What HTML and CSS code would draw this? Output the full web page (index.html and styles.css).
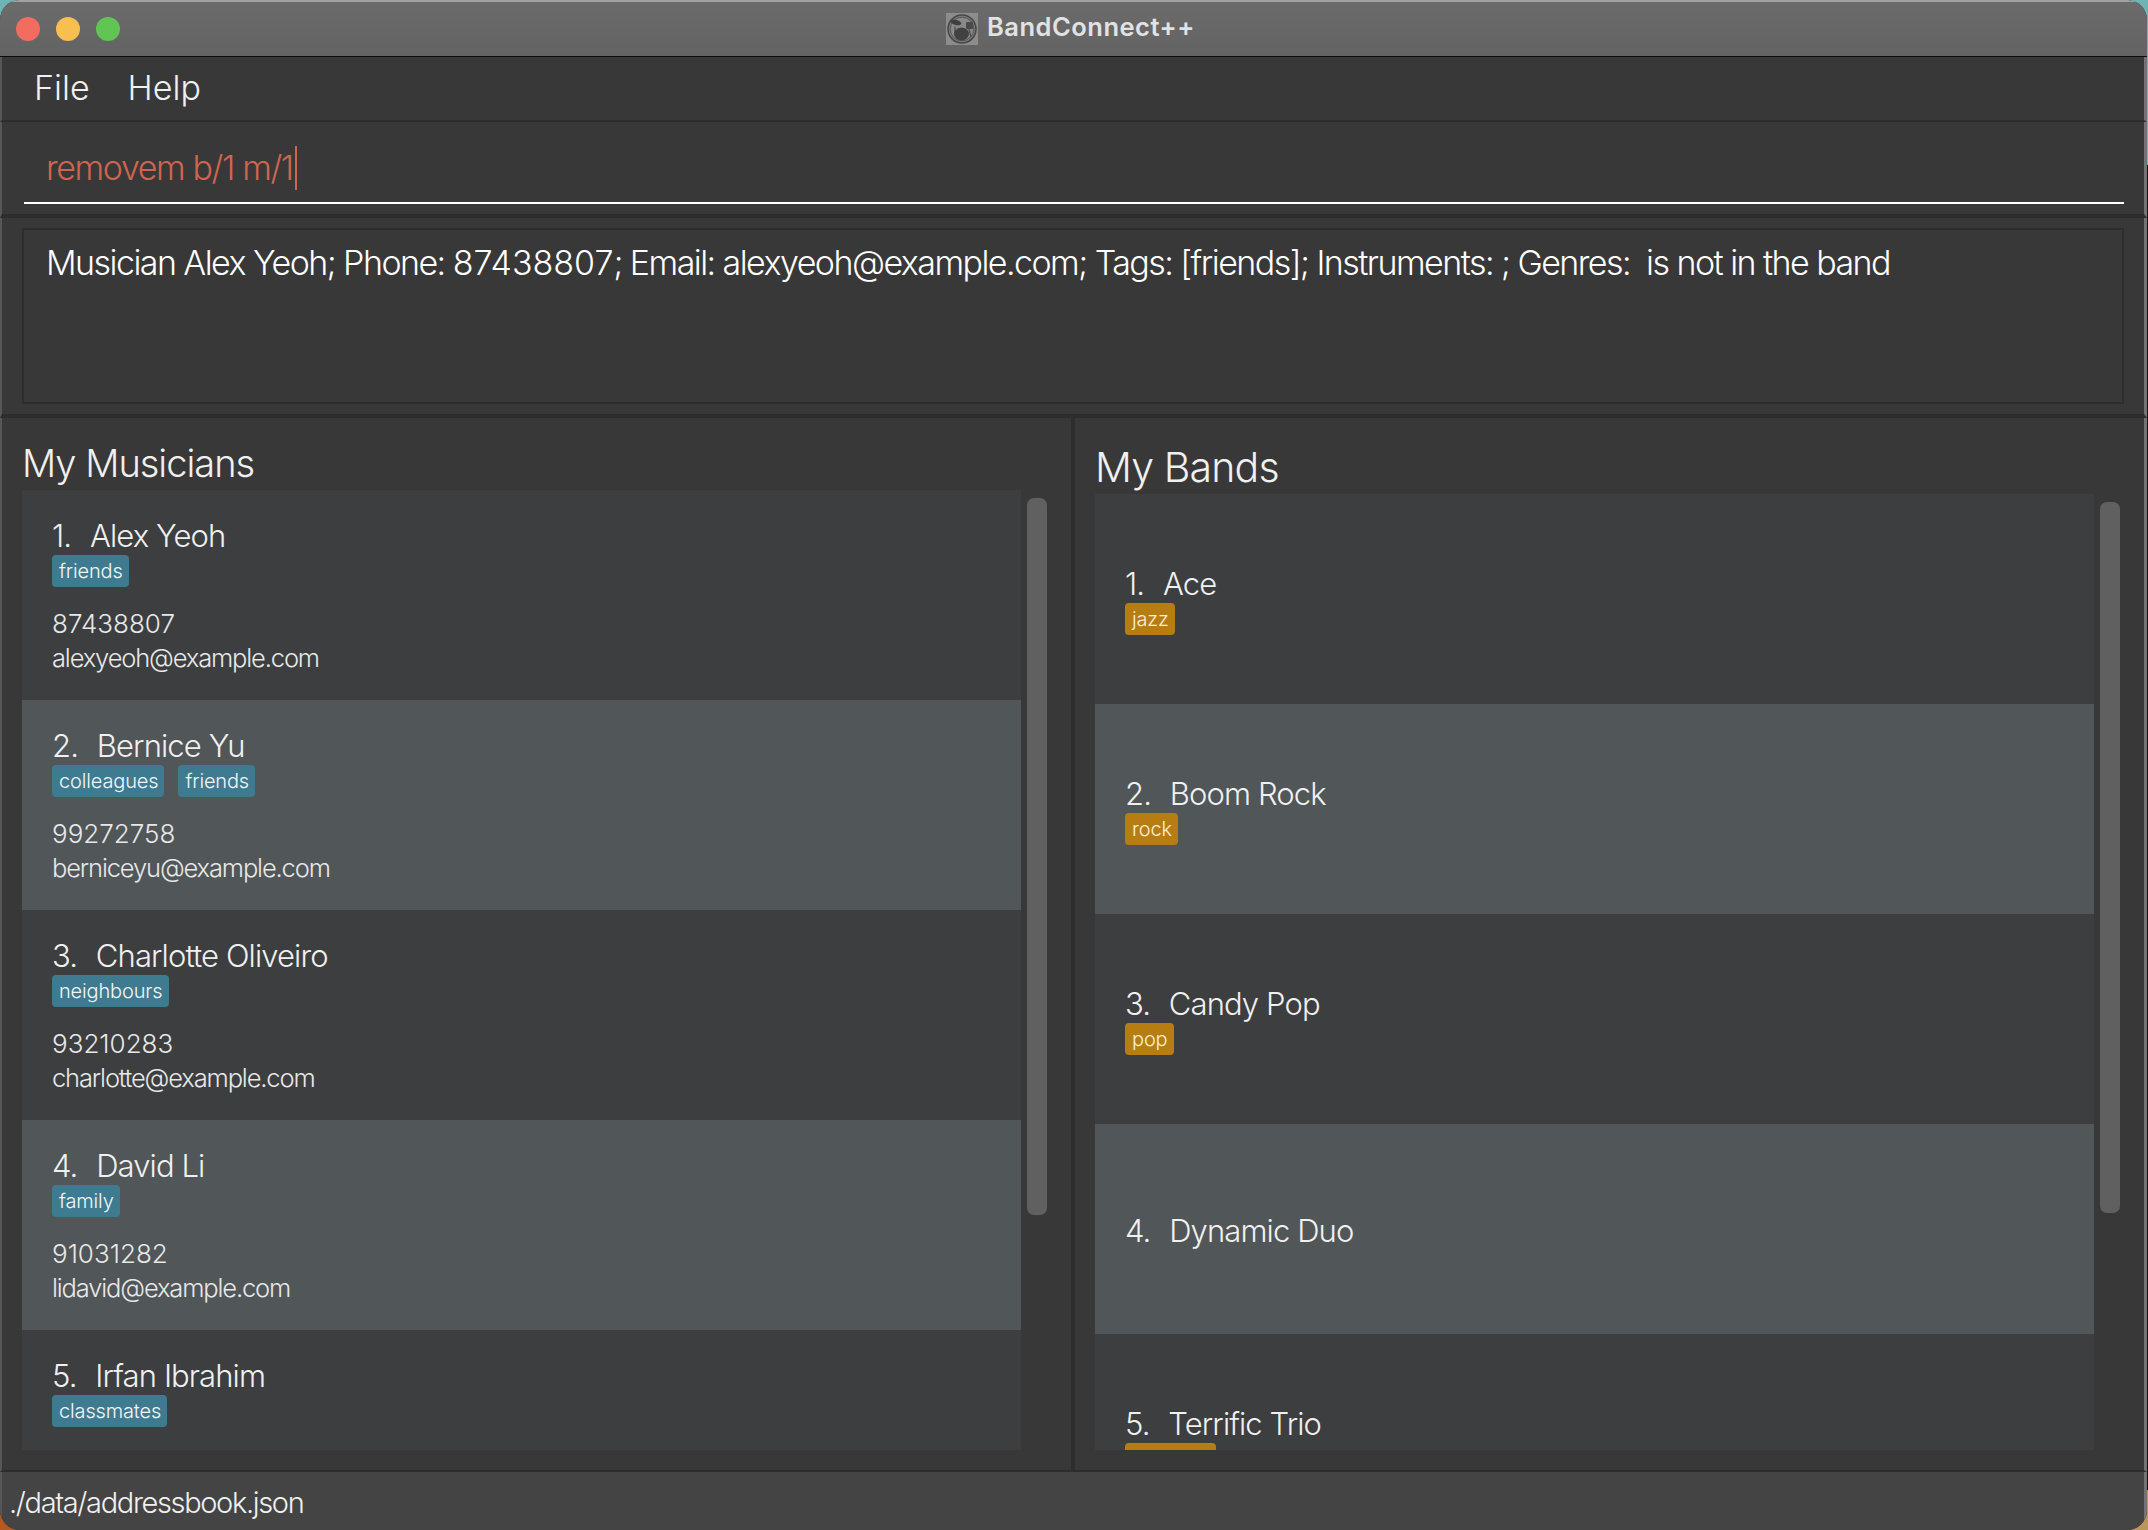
FILE: index.html
```html
<!DOCTYPE html>
<html lang="en">
<head>
    <meta charset="UTF-8">
    <meta name="viewport" content="width=device-width, initial-scale=1.0">
    <title>BandConnect++</title>
    <link rel="stylesheet" href="styles.css">
</head>
<body>
    <div class="window">
        <div class="titlebar">
            <div class="lights">
                <span class="light red"></span>
                <span class="light yellow"></span>
                <span class="light green"></span>
            </div>
            <div class="apptitle">
                <svg class="appicon" viewBox="0 0 32 32" width="32" height="32">
                    <rect width="32" height="32" fill="#8c8c8c"/>
                    <circle cx="16" cy="16" r="14" fill="#7a7a7a" stroke="#474747" stroke-width="1.5"/>
                    <circle cx="16" cy="16" r="11.8" fill="#8a8a8a" stroke="#555" stroke-width="1"/>
                    <ellipse cx="10" cy="9.5" rx="5.5" ry="2.6" fill="#3f3f3f" transform="rotate(14 10 9.5)"/>
                    <rect x="20" y="9" width="7" height="7" rx="1" fill="#4a4a4a"/>
                    <path d="M9 13.5 L9 22 M23 16 L25 24" stroke="#4a4a4a" stroke-width="1.2" fill="none"/>
                    <ellipse cx="15.5" cy="21" rx="7.5" ry="6.5" fill="#414141"/>
                </svg>
                <span>BandConnect++</span>
            </div>
        </div>

        <div class="menubar">
            <span class="menuitem">File</span>
            <span class="menuitem">Help</span>
        </div>

        <div class="commandbox">
            <div class="commandinput">removem b/1 m/1<span class="caret"></span></div>
        </div>

        <div class="resultbox">
            <div class="resultdisplay">Musician Alex Yeoh; Phone: <span class="digits">87438807</span>; Email: alexyeoh@example.com; Tags: [friends]; Instruments: ; Genres:&nbsp; is not in the band</div>
        </div>

        <div class="panels">
            <section class="panel musicians">
                <h2>My Musicians</h2>
                <div class="listwrap">
                    <div class="list">
                        <div class="card">
                            <div class="name"><span class="num">1.</span> Alex Yeoh</div>
                            <div class="tags"><span class="tag">friends</span></div>
                            <div class="phone">87438807</div>
                            <div class="email">alexyeoh@example.com</div>
                        </div>
                        <div class="card">
                            <div class="name"><span class="num">2.</span> Bernice Yu</div>
                            <div class="tags"><span class="tag">colleagues</span><span class="tag">friends</span></div>
                            <div class="phone">99272758</div>
                            <div class="email">berniceyu@example.com</div>
                        </div>
                        <div class="card">
                            <div class="name"><span class="num">3.</span> Charlotte Oliveiro</div>
                            <div class="tags"><span class="tag">neighbours</span></div>
                            <div class="phone">93210283</div>
                            <div class="email">charlotte@example.com</div>
                        </div>
                        <div class="card">
                            <div class="name"><span class="num">4.</span> David Li</div>
                            <div class="tags"><span class="tag">family</span></div>
                            <div class="phone">91031282</div>
                            <div class="email">lidavid@example.com</div>
                        </div>
                        <div class="card">
                            <div class="name"><span class="num">5.</span> Irfan Ibrahim</div>
                            <div class="tags"><span class="tag">classmates</span></div>
                        </div>
                    </div>
                    <div class="scrolltrack"><div class="thumb"></div></div>
                </div>
            </section>

            <section class="panel bands">
                <h2>My Bands</h2>
                <div class="listwrap">
                    <div class="list">
                        <div class="card band">
                            <div class="name"><span class="num">1.</span> Ace</div>
                            <div class="tags"><span class="tag genre">jazz</span></div>
                        </div>
                        <div class="card band">
                            <div class="name"><span class="num">2.</span> Boom Rock</div>
                            <div class="tags"><span class="tag genre">rock</span></div>
                        </div>
                        <div class="card band">
                            <div class="name"><span class="num">3.</span> Candy Pop</div>
                            <div class="tags"><span class="tag genre">pop</span></div>
                        </div>
                        <div class="card band">
                            <div class="name"><span class="num">4.</span> Dynamic Duo</div>
                        </div>
                        <div class="card band">
                            <div class="name"><span class="num">5.</span> Terrific Trio</div>
                            <div class="tags"><span class="tag genre wide"></span></div>
                        </div>
                    </div>
                    <div class="scrolltrack"><div class="thumb"></div></div>
                </div>
            </section>
        </div>

        <div class="statusbar">./data/addressbook.json</div>
    </div>
</body>
</html>
```

FILE: styles.css
```css
html, body {
    margin: 0;
    height: 100%;
}
body {
    overflow: hidden;
    font-family: "Inter", "Liberation Sans", sans-serif;
    font-weight: 300;
    color: #f0f0f0;
    background:
        linear-gradient(#b5591e, #b5591e) left bottom / 40px 40px no-repeat,
        linear-gradient(to bottom, #6fb3b5 0, #6fb3b5 165px, #1a1014 165px, #1a1014 1490px, #b9975b 1490px);
}
.window {
    width: 2147px;
    height: 1530px;
    display: flex;
    flex-direction: column;
    box-sizing: border-box;
    background: #383838;
    border-radius: 20px;
    overflow: hidden;
}

/* title bar */
.titlebar {
    height: 57px;
    flex: none;
    box-sizing: border-box;
    display: flex;
    align-items: center;
    border-top: 2px solid #a2a2a2;
    border-bottom: 1px solid #0c0c0c;
    background: linear-gradient(#6b6b6b, #636363);
    padding: 0 0 1px 16px;
}
.lights {
    display: flex;
    gap: 16px;
    flex: none;
    width: 930px;
}
.light {
    width: 24px;
    height: 24px;
    border-radius: 50%;
}
.red { background: #f26d60; }
.yellow { background: #f6bf4f; }
.green { background: #61c554; }
.apptitle {
    display: flex;
    align-items: center;
    gap: 9px;
    font-size: 25.5px;
    font-weight: 600;
    letter-spacing: 0.5px;
    line-height: 30px;
    color: #e2e2e2;
}
.apptitle span {
    margin-bottom: 3px;
}

/* everything under the title bar sits inside the side borders */
.menubar, .commandbox, .resultbox, .panels, .statusbar {
    flex: none;
    box-sizing: border-box;
    border-left: 2px solid #575757;
    border-right: 3px solid #737373;
}
.menubar {
    height: 65px;
    display: flex;
    align-items: center;
    gap: 38px;
    padding: 0 0 2px 32px;
    border-bottom: 2px solid #2d2d2d;
    font-size: 34px;
    font-weight: 300;
}
.commandbox {
    height: 96px;
    padding: 0 20px;
    border-bottom: 4px solid #2d2d2d;
}
.commandinput {
    height: 82px;
    box-sizing: border-box;
    border-bottom: 2px solid #fff;
    padding: 24px 0 0 22px;
    margin-left: 2px;
    font-size: 34px;
    letter-spacing: -1.4px;
    line-height: 44px;
    color: #d0654f;
    display: flex;
}
.caret {
    width: 2px;
    height: 44px;
    margin-left: 2px;
    background: #d0654f;
}
.resultbox {
    height: 200px;
    padding: 10px 20px;
    border-bottom: 4px solid #2d2d2d;
}
.resultdisplay {
    height: 176px;
    box-sizing: border-box;
    border: 2px solid #2d2d2d;
    padding: 11px 22px;
    font-size: 34px;
    letter-spacing: -1.55px;
    line-height: 44px;
    color: #fff;
}
.digits {
    letter-spacing: 0;
}

/* two lists */
.panels {
    height: 1054px;
    display: flex;
    border-bottom: 2px solid #2d2d2d;
}
.panel {
    width: 1069px;
    box-sizing: border-box;
    padding-left: 20px;
}
.musicians {
    border-right: 0;
}
.bands {
    border-left: 4px solid #2d2d2d;
    width: 1073px;
}
h2 {
    margin: 0;
    font-weight: 300;
    line-height: 52px;
}
.musicians h2 {
    font-size: 38px;
    letter-spacing: -1px;
    padding: 19px 0 1px;
}
.bands h2 {
    font-size: 41px;
    letter-spacing: -0.85px;
    padding: 23px 0 1px;
}
.listwrap {
    display: flex;
    height: 960px;
}
.bands .listwrap {
    height: 956px;
}
.list {
    width: 999px;
    flex: none;
    overflow: hidden;
}
.scrolltrack {
    width: 20px;
    margin-left: 6px;
    flex: none;
}
.thumb {
    width: 20px;
    margin-top: 8px;
    height: 717px;
    border-radius: 7px;
    background: #606060;
}
.bands .thumb {
    height: 711px;
}
.card {
    height: 210px;
    box-sizing: border-box;
    padding: 29px 0 0 30px;
    background: #3c3e3f;
}
.card:nth-child(even) {
    background: #515658;
}
.card.band {
    padding: 4px 0 0 30px;
    display: flex;
    flex-direction: column;
    justify-content: center;
}
.name {
    font-size: 31px;
    letter-spacing: -0.9px;
    line-height: 34px;
    color: #f0f0f0;
}
.num {
    margin-right: 11px;
}
.tags {
    display: flex;
    gap: 14px;
    margin-top: 2px;
}
.tag {
    height: 32px;
    box-sizing: border-box;
    padding: 0 6px 0 7px;
    border-radius: 4px;
    background: #3e7b91;
    font-size: 20px;
    font-weight: 300;
    letter-spacing: -0.15px;
    line-height: 33px;
    color: #f2f6f7;
}
.tag.genre {
    background: #b87d12;
    color: #f8eedc;
}
.tag.wide {
    width: 91px;
}
.phone, .email {
    font-size: 25.5px;
    line-height: 35px;
    color: #e8e8e8;
}
.phone {
    font-size: 26px;
    margin-top: 19px;
}
.email {
    letter-spacing: -1.15px;
    line-height: 34px;
}
.statusbar {
    height: 58px;
    padding: 3px 0 0 7px;
    background: #444;
    font-size: 29px;
    letter-spacing: -1.35px;
    line-height: 55px;
    color: #f0f0f0;
}
```
